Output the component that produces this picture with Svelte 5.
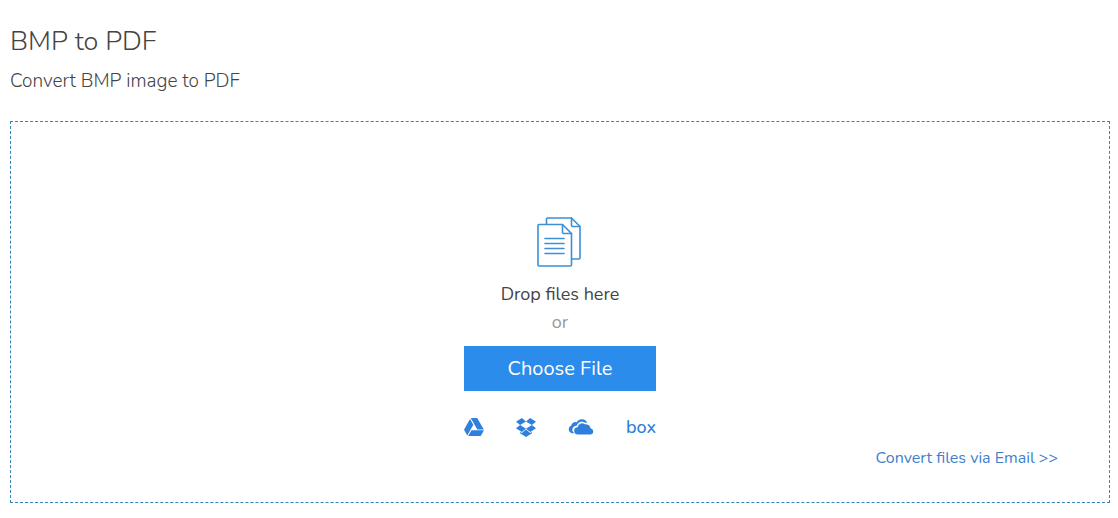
<script lang="ts">
	interface Source {
		id: string;
		label: string;
	}

	const SOURCES: Source[] = [
		{ id: 'drive', label: 'Google Drive' },
		{ id: 'dropbox', label: 'Dropbox' },
		{ id: 'onedrive', label: 'OneDrive' },
		{ id: 'box', label: 'Box' }
	];
</script>

<main class="converter">
	<h1>BMP to PDF</h1>
	<h2>Convert BMP image to PDF</h2>

	<section class="drop-zone">
		<svg class="files-icon" viewBox="0 0 46 50" aria-hidden="true">
			<path d="M9.5 7V2Q9.5 1 10.5 1H34.5L43 9.5V41Q43 42 42 42H35" />
			<path d="M34.5 1V8.5Q34.5 9.5 35.5 9.5H43" />
			<path d="M2 7.5H25.5L34.5 16.5V48Q34.5 49 33.5 49H2Q1 49 1 48V8.5Q1 7.5 2 7.5Z" />
			<path d="M25.5 7.5V15.5Q25.5 16.5 26.5 16.5H34.5" />
			<path d="M8 21.5H27M8 26.5H27M8 31.5H27M8 36.5H27" />
		</svg>
		<p class="drop-text">Drop files here</p>
		<p class="or">or</p>
		<button type="button" class="choose">Choose File</button>

		<div class="sources">
			{#each SOURCES as source}
				<button type="button" class="source" aria-label={source.label}>
					{#if source.id === 'drive'}
						<svg width="20" height="18" viewBox="0 0 20 18">
							<path d="M6.7 0H13.2L19.8 11.4H13.3Z" />
							<path d="M6 1.1L9.3 6.8L3.3 17.4L0 11.7Z" />
							<path d="M7.5 12.3H20L16.7 18H4.2Z" />
						</svg>
					{:else if source.id === 'dropbox'}
						<svg width="20" height="19" viewBox="0 0 20 19">
							<path d="M5.8 0L10 3.4L4.1 7L0 3.7Z" />
							<path d="M14.2 0L10 3.4L15.9 7L20 3.7Z" />
							<path d="M4.1 7L10 10.7L5.8 14L0 10.3Z" />
							<path d="M15.9 7L10 10.7L14.2 14L20 10.3Z" />
							<path d="M10 11.6L14.2 15L16 13.9V15.3L10 19L4 15.3V13.9L5.8 15Z" />
						</svg>
					{:else if source.id === 'onedrive'}
						<svg width="26" height="16" viewBox="0 0 26 16">
							<path d="M6.3 14.2H4A4 4 0 0 1 3.2 6.6A4.8 4.8 0 0 1 8.7 3.2A6 6 0 0 1 19.3 3.6A5.6 5.6 0 0 0 17.2 3.8A5.2 5.2 0 0 0 8.8 6.8A4 4 0 0 0 6.3 14.2Z" />
							<path d="M10 15.5A3.6 3.6 0 0 1 9.6 8.2A4.6 4.6 0 0 1 16.8 5.2A5 5 0 0 1 22.5 9.2A3.2 3.2 0 0 1 22.7 15.5Z" />
						</svg>
					{:else}
						<span class="box-logo">box</span>
					{/if}
				</button>
			{/each}
		</div>

		<a class="email-link" href="#email">Convert files via Email &gt;&gt;</a>
	</section>
</main>

<style>
	:global(body) {
		margin: 0;
		background: #fff;
	}
	.converter {
		padding: 24px 8px 15px 10px;
		font-family: Nunito, Lato, sans-serif;
		color: #444;
	}
	h1,
	h2 {
		margin: 0;
		font-weight: 300;
	}
	h1 {
		font-size: 27px;
		line-height: 36px;
	}
	h2 {
		margin-top: 8px;
		font-size: 19px;
		line-height: 26px;
	}
	.drop-zone {
		display: flex;
		flex-direction: column;
		align-items: center;
		margin-top: 27px;
		padding: 95px 51px 32px;
		border: 1px dashed #3484b4;
	}
	.files-icon {
		width: 46px;
		height: 50px;
		fill: none;
		stroke: #3d8fd6;
		stroke-width: 1.6;
		stroke-linejoin: round;
		stroke-linecap: round;
	}
	p {
		margin: 0;
		font-size: 18px;
		line-height: 28px;
	}
	.drop-text {
		margin-top: 13px;
	}
	.or {
		color: #999;
	}
	.choose {
		width: 192px;
		height: 45px;
		margin-top: 10px;
		padding: 0;
		border: 0;
		background: #2b8ceb;
		color: #fff;
		font: 20px/24px Nunito, Lato, sans-serif;
		cursor: pointer;
	}
	.sources {
		display: flex;
		justify-content: space-between;
		align-items: center;
		width: 192px;
		height: 24px;
		margin-top: 24px;
	}
	.source {
		display: flex;
		padding: 0;
		border: 0;
		background: none;
		color: #2f80dc;
		cursor: pointer;
	}
	.source svg {
		fill: currentColor;
	}
	.box-logo {
		font: 500 18px/24px Nunito, Lato, sans-serif;
	}
	.email-link {
		align-self: flex-end;
		margin-top: 7px;
		color: #3f80cc;
		font-size: 16px;
		line-height: 24px;
		text-decoration: none;
	}
</style>
